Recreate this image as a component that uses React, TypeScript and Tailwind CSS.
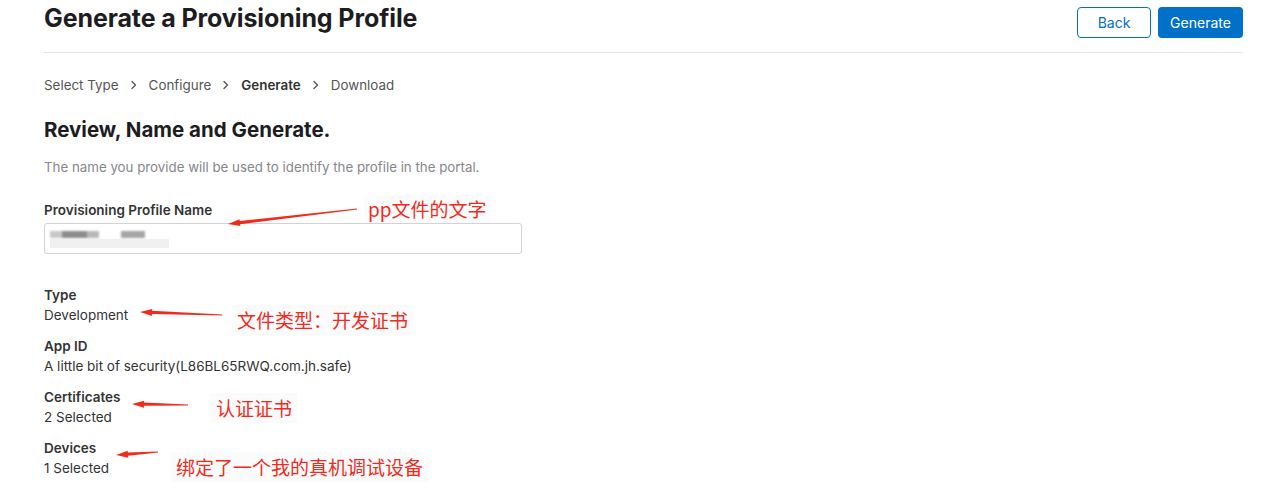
import React from 'react';

const FONT = { fontFamily: 'Inter, "Noto Sans", "Liberation Sans", sans-serif' };
const CJK = { fontFamily: '"Noto Sans CJK SC", "Noto Sans", sans-serif' };

interface DetailItem {
  label: string;
  value: string;
}

const details: DetailItem[] = [
  { label: 'Type', value: 'Development' },
  { label: 'App ID', value: 'A little bit of security(L86BL65RWQ.com.jh.safe)' },
  { label: 'Certificates', value: '2 Selected' },
  { label: 'Devices', value: '1 Selected' },
];

const steps = ['Select Type', 'Configure', 'Generate', 'Download'];

// tapered red arrow, tip on the left
function Arrow({ x1, y1, x2, y2 }: { x1: number; y1: number; x2: number; y2: number }) {
  const dx = x2 - x1;
  const dy = y2 - y1;
  const len = Math.sqrt(dx * dx + dy * dy);
  const ux = dx / len;
  const uy = dy / len;
  const nx = -uy;
  const ny = ux;
  const head = 12;
  const hw = 3.5;
  const bx = x2 - ux * head;
  const by = y2 - uy * head;
  const d = [
    `M ${x1 + nx * 0.6} ${y1 + ny * 0.6}`,
    `L ${bx + nx * 1.6} ${by + ny * 1.6}`,
    `L ${bx + nx * hw} ${by + ny * hw}`,
    `L ${x2} ${y2}`,
    `L ${bx - nx * hw} ${by - ny * hw}`,
    `L ${bx - nx * 1.6} ${by - ny * 1.6}`,
    `L ${x1 - nx * 0.6} ${y1 - ny * 0.6}`,
    'Z',
  ].join(' ');
  return <path d={d} fill="#f22a1d" />;
}

function Chevron() {
  return (
    <svg width="6" height="10" viewBox="0 0 6 10" className="mx-[12px]">
      <path d="M1 1.5 L4.5 5 L1 8.5" fill="none" stroke="#555" strokeWidth="1.3" strokeLinecap="round" strokeLinejoin="round" />
    </svg>
  );
}

export default function App() {
  return (
    <div className="relative w-[1280px] h-[500px] bg-white overflow-hidden" style={FONT}>
      <div className="ml-[44px] mr-[37px]">
        <div className="flex items-start justify-between h-[53px] border-b border-[#e5e5e5]">
          <h1 className="text-[25px] leading-[36px] font-bold text-[#1d1d1f] tracking-[-0.1px]">
            Generate a Provisioning Profile
          </h1>
          <div className="flex gap-[7px] pt-[7px]">
            <button className="h-[31px] w-[74px] rounded-[4px] border border-[#0070c9] text-[#0070c9] text-[14px]">
              Back
            </button>
            <button className="h-[31px] w-[85px] rounded-[4px] bg-[#0070c9] text-white text-[14px]">
              Generate
            </button>
          </div>
        </div>

        <nav className="flex items-center mt-[21px] h-[22px] text-[13.4px] text-[#555]">
          {steps.map((s, i) => (
            <div key={s} className="flex items-center">
              {i > 0 && <Chevron />}
              <span className={s === 'Generate' ? 'font-semibold text-[#333]' : ''}>{s}</span>
            </div>
          ))}
        </nav>

        <h2 className="mt-[20px] text-[20.5px] leading-[28px] font-bold text-[#1d1d1f]">
          Review, Name and Generate.
        </h2>
        <p className="mt-[13px] text-[13.3px] leading-[20px] text-[#86868b]">
          The name you provide will be used to identify the profile in the portal.
        </p>

        <div className="mt-[23px]">
          <div className="text-[13.5px] leading-[20px] font-semibold text-[#333]">Provisioning Profile Name</div>
          <div className="mt-[3px] w-[478px] h-[31px] border border-[#d2d2d7] rounded-[3px] relative">
            <div className="absolute left-[5px] top-[7px] flex gap-0 blur-[1px]">
              <div className="w-[12px] h-[7px] bg-[#c8c8c8]" />
              <div className="w-[25px] h-[7px] bg-[#8c8c8c]" />
              <div className="w-[12px] h-[7px] bg-[#b8b8b8]" />
              <div className="w-[22px] h-[7px] bg-white" />
              <div className="w-[24px] h-[7px] bg-[#a5a5a5]" />
            </div>
            <div className="absolute left-[5px] top-[15px] w-[119px] h-[9px] bg-[#f0f0f0] blur-[0.5px]" />
          </div>
        </div>

        <div className="mt-[32px] flex flex-col gap-[12px]">
          {details.map((d) => (
            <div key={d.label} className="text-[13.5px] leading-[19.5px] text-[#333]">
              <div className="font-semibold">{d.label}</div>
              <div>{d.value}</div>
            </div>
          ))}
        </div>
      </div>

      {/* annotations */}
      <svg className="absolute inset-0 pointer-events-none" width="1280" height="500">
        <Arrow x1={357} y1={209} x2={228} y2={224} />
        <Arrow x1={222} y1={315} x2={140} y2={312} />
        <Arrow x1={188} y1={405} x2={132} y2={404} />
        <Arrow x1={158} y1={452} x2={116} y2={455} />
      </svg>
      <div className="absolute left-[364px] top-[195px] px-[4px] text-[19px] leading-[28px] text-[#f22a1d] bg-[#fcfcfc]" style={CJK}>
        pp文件的文字
      </div>
      <div className="absolute left-[232px] top-[305px] px-[5px] text-[19px] leading-[30px] text-[#f22a1d] bg-[#fbfbfb]" style={CJK}>
        文件类型：开发证书
      </div>
      <div className="absolute left-[211px] top-[393px] px-[5px] text-[19px] leading-[30px] text-[#f22a1d] bg-[#fbfbfb]" style={CJK}>
        认证证书
      </div>
      <div className="absolute left-[171px] top-[452px] px-[5px] text-[19px] leading-[30px] text-[#f22a1d] bg-[#fbfbfb]" style={CJK}>
        绑定了一个我的真机调试设备
      </div>
    </div>
  );
}
